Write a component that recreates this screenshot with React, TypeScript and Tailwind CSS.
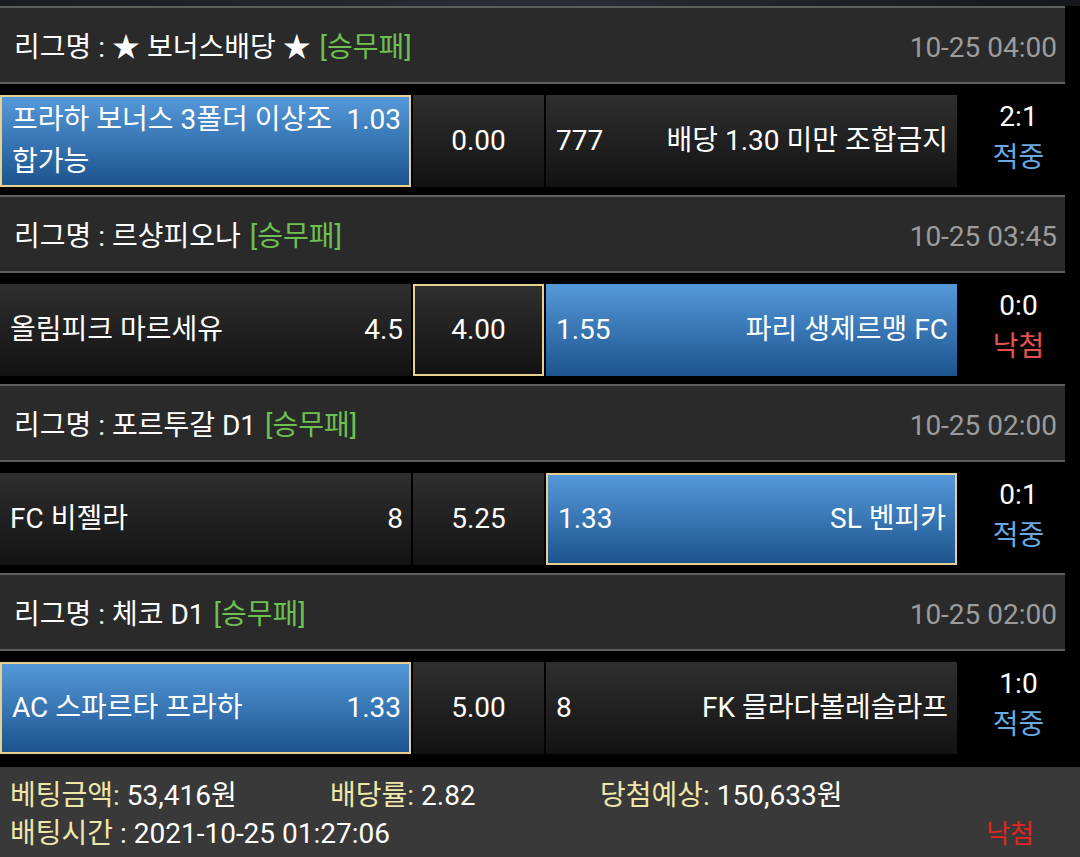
import React from "react";

type Side = { name: string; odds: string; blue?: boolean; gold?: boolean; wrap?: [string, string] };
type Match = {
  league: string;
  time: string;
  home: Side;
  mid: { value: string; gold?: boolean };
  away: Side;
  score: string;
  result: "적중" | "낙첨";
};

const matches: Match[] = [
  {
    league: "리그명 : ★ 보너스배당 ★",
    time: "10-25 04:00",
    home: {
      name: "프라하 보너스 3폴더 이상조합가능",
      odds: "1.03",
      blue: true,
      gold: true,
      wrap: ["프라하 보너스 3폴더 이상조", "합가능"],
    },
    mid: { value: "0.00" },
    away: { name: "배당 1.30 미만 조합금지", odds: "777" },
    score: "2:1",
    result: "적중",
  },
  {
    league: "리그명 : 르샹피오나",
    time: "10-25 03:45",
    home: { name: "올림피크 마르세유", odds: "4.5" },
    mid: { value: "4.00", gold: true },
    away: { name: "파리 생제르맹 FC", odds: "1.55", blue: true },
    score: "0:0",
    result: "낙첨",
  },
  {
    league: "리그명 : 포르투갈 D1",
    time: "10-25 02:00",
    home: { name: "FC 비젤라", odds: "8" },
    mid: { value: "5.25" },
    away: { name: "SL 벤피카", odds: "1.33", blue: true, gold: true },
    score: "0:1",
    result: "적중",
  },
  {
    league: "리그명 : 체코 D1",
    time: "10-25 02:00",
    home: { name: "AC 스파르타 프라하", odds: "1.33", blue: true, gold: true },
    mid: { value: "5.00" },
    away: { name: "FK 믈라다볼레슬라프", odds: "8" },
    score: "1:0",
    result: "적중",
  },
];

const font = { fontFamily: "Roboto, 'Noto Sans CJK KR', 'Noto Sans', sans-serif" };

function cellBg(blue?: boolean, gold?: boolean) {
  const bg = blue
    ? "bg-gradient-to-b from-[#5599da] to-[#1c548e]"
    : "bg-gradient-to-b from-[#2f2f2f] to-[#131313]";
  const border = gold ? "border-2 border-[#e8d18f]" : "";
  return `${bg} ${border}`;
}

function HomeCell({ s }: { s: Side }) {
  return (
    <div className={`w-[411px] h-full box-border flex items-center text-white ${cellBg(s.blue, s.gold)}`}>
      {s.wrap ? (
        <div className="w-full pl-[10px] pr-[8px] leading-[42px]">
          <div className="flex justify-between whitespace-nowrap">
            <span>{s.wrap[0]}</span>
            <span>{s.odds}</span>
          </div>
          <div>{s.wrap[1]}</div>
        </div>
      ) : (
        <div className="w-full flex justify-between pl-[10px] pr-[8px]">
          <span>{s.name}</span>
          <span>{s.odds}</span>
        </div>
      )}
    </div>
  );
}

function AwayCell({ s }: { s: Side }) {
  return (
    <div className={`w-[411px] h-full box-border flex items-center text-white ${cellBg(s.blue, s.gold)}`}>
      <div className="w-full flex justify-between pl-[10px] pr-[9px]">
        <span>{s.odds}</span>
        <span>{s.name}</span>
      </div>
    </div>
  );
}

function MatchBlock({ m }: { m: Match }) {
  return (
    <div>
      <div className="w-[1065px] h-[78px] box-border border-t-2 border-b-2 border-[#5e5e5e] bg-[#2a2a2a] flex items-center justify-between pl-[14px] pr-[8px] pt-[5px]">
        <div className="text-white">
          {m.league} <span className="text-[#6cc150] ml-[2px]">[승무패]</span>
        </div>
        <div className="text-[#9c9c9c]">{m.time}</div>
      </div>
      <div className="h-[11px]" />
      <div className="h-[92px] flex gap-[2px]">
        <HomeCell s={m.home} />
        <div
          className={`w-[131px] h-full box-border flex items-center justify-center text-white ${cellBg(false, m.mid.gold)}`}
        >
          {m.mid.value}
        </div>
        <AwayCell s={m.away} />
        <div className="flex-1 flex flex-col items-center justify-center leading-[41px] pr-[2px] pb-[8px]">
          <span className="text-white">{m.score}</span>
          <span className={m.result === "적중" ? "text-[#6aa9e2]" : "text-[#e65252]"}>{m.result}</span>
        </div>
      </div>
      <div className="h-[8px]" />
    </div>
  );
}

export default function App() {
  return (
    <div className="w-[1080px] h-[857px] bg-black overflow-hidden text-[28px]" style={font}>
      <div className="h-[6px] bg-gradient-to-r from-[#1a1c22] via-[#2a2d35] to-[#15171c]" />
      {matches.map((m, i) => (
        <MatchBlock key={i} m={m} />
      ))}
      <div className="h-[5px]" />
      <div className="h-[91px] bg-[#393939] text-[28px] flex flex-col justify-center pl-[10px] pt-[4px] leading-[38px]">
        <div className="flex">
          <div className="w-[320px]">
            <span className="text-[#efe7a9]">베팅금액:</span> <span className="text-white">53,416원</span>
          </div>
          <div className="w-[270px]">
            <span className="text-[#efe7a9]">배당률:</span> <span className="text-white">2.82</span>
          </div>
          <div>
            <span className="text-[#efe7a9]">당첨예상:</span> <span className="text-white">150,633원</span>
          </div>
        </div>
        <div className="flex justify-between pr-[46px]">
          <div>
            <span className="text-[#efe7a9]">배팅시간</span>
            <span className="text-white"> : 2021-10-25 01:27:06</span>
          </div>
          <span className="text-[#e22424] text-[26px]">낙첨</span>
        </div>
      </div>
    </div>
  );
}
